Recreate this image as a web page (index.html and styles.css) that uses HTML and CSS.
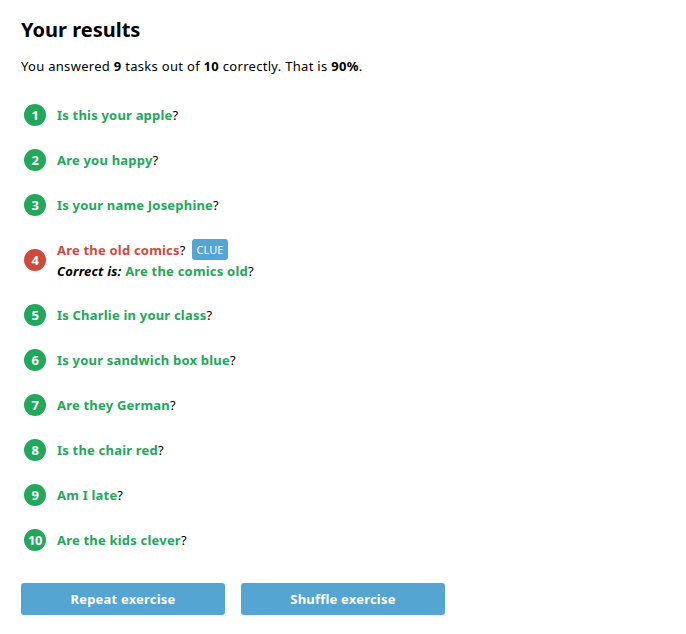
FILE: index.html
```html
<!DOCTYPE html>
<html>
<head>
<meta charset="utf-8">
<link rel="stylesheet" href="styles.css">
</head>
<body>
<div class="page">
  <h1 class="title">Your results</h1>
  <p class="summary">You answered <b>9</b> tasks out of <b>10</b> correctly. That is <b>90%</b>.</p>
  <ol class="results">
    <li class="item"><span class="num ok">1</span><div class="text"><span class="ans ok">Is this your apple</span>?</div></li>
    <li class="item"><span class="num ok">2</span><div class="text"><span class="ans ok">Are you happy</span>?</div></li>
    <li class="item"><span class="num ok">3</span><div class="text"><span class="ans ok">Is your name Josephine</span>?</div></li>
    <li class="item"><span class="num bad">4</span><div class="text"><div class="line"><span><span class="ans bad">Are the old comics</span>?</span><span class="clue">CLUE</span></div><div class="line"><span><i class="correct">Correct is:</i> <span class="ans ok">Are the comics old</span>?</span></div></div></li>
    <li class="item"><span class="num ok">5</span><div class="text"><span class="ans ok">Is Charlie in your class</span>?</div></li>
    <li class="item"><span class="num ok">6</span><div class="text"><span class="ans ok">Is your sandwich box blue</span>?</div></li>
    <li class="item"><span class="num ok">7</span><div class="text"><span class="ans ok">Are they German</span>?</div></li>
    <li class="item"><span class="num ok">8</span><div class="text"><span class="ans ok">Is the chair red</span>?</div></li>
    <li class="item"><span class="num ok">9</span><div class="text"><span class="ans ok">Am I late</span>?</div></li>
    <li class="item"><span class="num ok">10</span><div class="text"><span class="ans ok">Are the kids clever</span>?</div></li>
  </ol>
  <div class="actions">
    <button class="btn">Repeat exercise</button>
    <button class="btn">Shuffle exercise</button>
  </div>
</div>
</body>
</html>
```
FILE: styles.css
```css
html, body { margin: 0; padding: 0; background: #fff; }
body { font-family: "Noto Sans", "Open Sans", sans-serif; font-size: 13px; color: #000; letter-spacing: 0.2px; }
.page { padding: 16px 21px 0 21px; }
.title { margin: 0; font-size: 20px; font-weight: 700; line-height: 28px; letter-spacing: 0; }
.summary { margin: 13px 0 0 0; line-height: 18px; letter-spacing: 0.3px; }
.results { list-style: none; margin: 29px 0 0 0; padding: 0 0 0 3px; display: flex; flex-direction: column; gap: 23px; }
.item { display: flex; align-items: center; gap: 11px; }
.num { width: 22px; height: 22px; border-radius: 50%; color: #fff; font-weight: 700; font-size: 13px; display: flex; align-items: center; justify-content: center; flex: none; letter-spacing: -0.5px; }
.num.ok { background: #22a85a; }
.num.bad { background: #cf4a3c; }
.text { line-height: 22px; }
.line { display: flex; align-items: center; gap: 6px; height: 21px; }
.ans { font-weight: 700; }
.ans.ok { color: #22a85a; }
.ans.bad { color: #cf4a3c; }
.correct { font-weight: 700; }
.clue { display: block; background: #55a5d3; color: #fff; font-size: 11px; line-height: 21px; padding: 0 5px; border-radius: 3px; letter-spacing: 0; }
.actions { margin-top: 32px; display: flex; gap: 16px; }
.btn { width: 204px; height: 32px; border: 0; border-radius: 3px; background: #55a5d3; color: #fff; font-family: inherit; font-size: 13px; font-weight: 700; letter-spacing: 0.2px; padding: 0; }
```
